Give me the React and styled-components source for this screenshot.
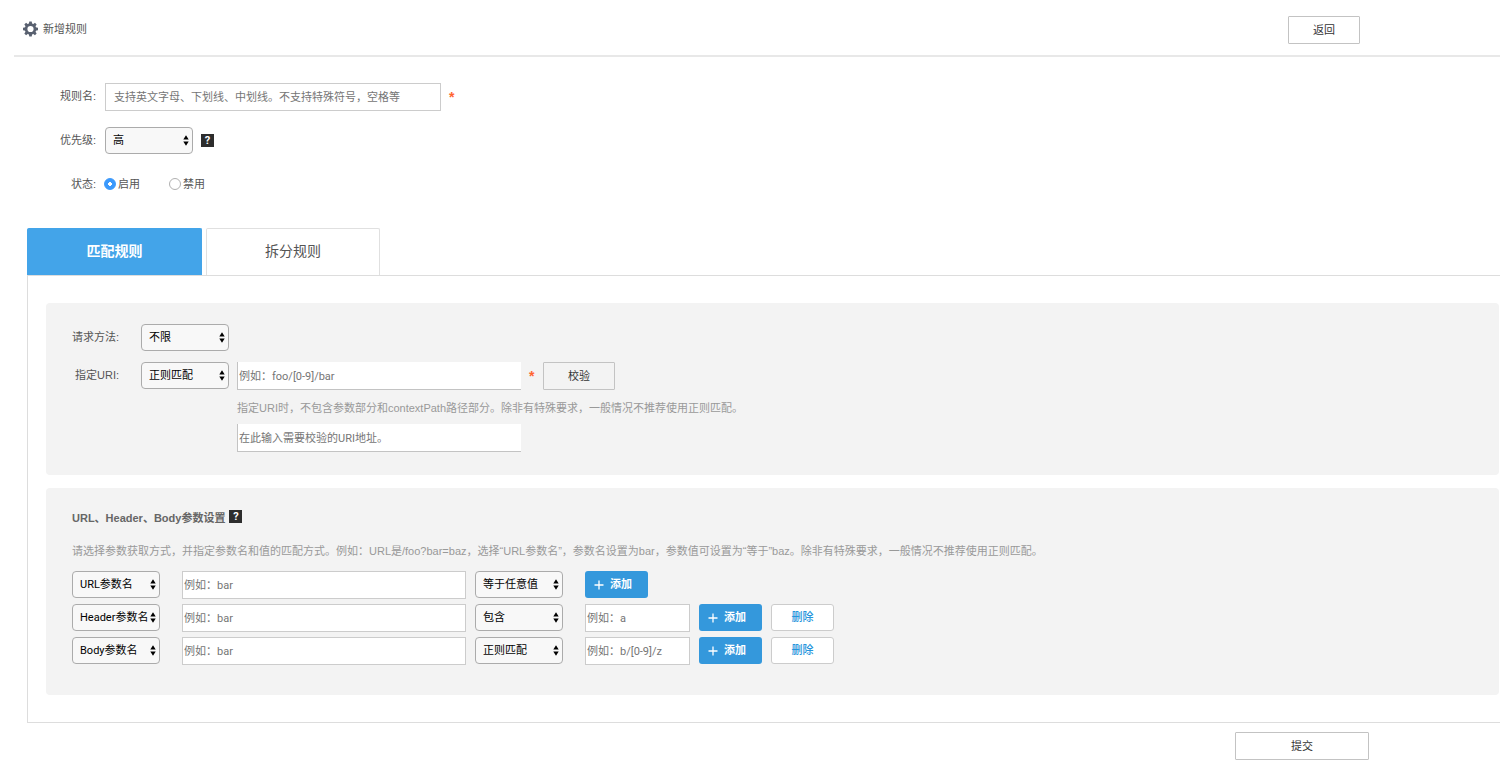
import React, { useState } from "react";
import styled, { createGlobalStyle } from "styled-components";

const GlobalStyle = createGlobalStyle`
  * {
    box-sizing: border-box;
  }
  body {
    margin: 0;
    background: #fff;
    color: #666;
    font: 11px/16px "Liberation Sans", "Noto Sans CJK SC", sans-serif;
  }
  button, input, select {
    font: 11px/16px Roboto, "Noto Sans CJK SC", sans-serif;
    margin: 0;
  }
`;

const Page = styled.div`
  padding-bottom: 4px;
`;

const Header = styled.header`
  display: flex;
  align-items: center;
  justify-content: space-between;
  height: 57px;
  margin-left: 14px;
  padding: 4px 140px 0 8px;
  border-bottom: 2px solid #e8e8e8;
`;

const Title = styled.h1`
  display: flex;
  align-items: center;
  gap: 4px;
  margin: 0;
  padding-bottom: 2px;
  font-size: 11px;
  font-weight: normal;
  color: #555;
`;

const OutlineButton = styled.button`
  width: ${(props) => (props.$wide ? "134px" : "72px")};
  height: 28px;
  padding: 2px 0 0;
  border: 1px solid #c3c3c3;
  border-radius: 1px;
  background: ${(props) => (props.$muted ? "#f3f3f3" : "#fff")};
  color: #333;
  cursor: pointer;
`;

const BasicForm = styled.div`
  display: grid;
  grid-template-columns: 96px 1fr;
  grid-auto-rows: 28px;
  row-gap: 16px;
  column-gap: 9px;
  align-items: start;
  padding-top: 26px;
`;

const Label = styled.label`
  text-align: right;
  line-height: 26px;
  color: #555;
`;

const Field = styled.div`
  display: flex;
  align-items: flex-start;
  gap: 8px;
`;

const TextInput = styled.input`
  width: ${(props) => props.$width};
  height: 28px;
  padding: 0 ${(props) => (props.$roomy ? "8px" : "1px")};
  border: 1px solid #ccc;
  border-radius: 0;
  background: #fff;
  color: #333;
  outline: none;
  &::placeholder {
    color: #757575;
    opacity: 1;
  }
`;

const InsetInput = styled(TextInput)`
  padding-top: 2px;
  border-width: 0 0 1px 1px;
  border-color: #c3c3c3;
`;

const Required = styled.span`
  width: 6px;
  line-height: 28px;
  color: #ff6430;
  font-size: 14px;
  font-weight: bold;
`;

const SelectBox = styled.div`
  position: relative;
  width: 88px;
  height: 27px;
  > svg {
    position: absolute;
    right: 4px;
    top: 8px;
    pointer-events: none;
  }
`;

const NativeSelect = styled.select`
  appearance: none;
  width: 100%;
  height: 100%;
  padding: 1px 0 0 7px;
  border: 1px solid #ababab;
  border-radius: 4px;
  background: #f8f8f8;
  color: #000;
`;

const HelpBadge = styled.button`
  align-self: ${(props) => (props.$centered ? "center" : "flex-start")};
  width: 13px;
  height: 13px;
  padding: 0;
  border: none;
  background: #2d2d2d;
  color: #fff;
  font-size: 11px;
  line-height: 13px;
  font-weight: bold;
`;

const RadioGroup = styled.div`
  display: flex;
  gap: 29px;
  margin-left: -1px;
`;

const RadioLabel = styled.label`
  display: flex;
  align-items: center;
  gap: 2px;
  line-height: 26px;
  color: #555;
`;

const Radio = styled.input`
  appearance: none;
  width: 12px;
  height: 12px;
  border: 1px solid #b0b0b0;
  border-radius: 50%;
  background: #fff;
  &:checked {
    border-color: #3b99fc;
    background: radial-gradient(circle, #fff 0 2px, #3b99fc 2px);
  }
`;

const Tabs = styled.div`
  display: flex;
  gap: 4px;
  margin: 29px 0 0 27px;
`;

const Tab = styled.button`
  width: ${(props) => (props.$active ? "175px" : "174px")};
  height: 47px;
  padding: 0 0 2px;
  border: 1px solid ${(props) => (props.$active ? "#43a4e9" : "#e0e0e0")};
  border-bottom: none;
  border-radius: 2px 2px 0 0;
  background: ${(props) => (props.$active ? "#43a4e9" : "#fff")};
  color: ${(props) => (props.$active ? "#fff" : "#555")};
  font-size: 14px;
  line-height: 20px;
  font-weight: ${(props) => (props.$active ? "bold" : "normal")};
  cursor: pointer;
`;

const Panel = styled.div`
  display: flex;
  flex-direction: column;
  gap: 13px;
  margin-left: 27px;
  padding: 27px 1px 27px 18px;
  border: 1px solid #ddd;
  border-right: none;
`;

const Card = styled.section`
  padding: ${(props) => props.$padding};
  border-radius: 4px;
  background: #f3f3f3;
`;

const MatchForm = styled.div`
  display: grid;
  grid-template-columns: 73px 1fr;
  grid-template-rows: 28px 28px auto;
  column-gap: 22px;
  row-gap: 10px;
  align-items: start;
`;

const UriDetails = styled.div`
  grid-column: 2;
  display: flex;
  flex-direction: column;
  align-items: flex-start;
  gap: 8px;
  padding-left: 96px;
`;

const Hint = styled.p`
  margin: 0;
  color: #999;
`;

const SectionTitle = styled.h2`
  display: flex;
  align-items: flex-start;
  gap: 4px;
  margin: 0 0 17px;
  font-size: 11px;
  line-height: 16px;
  color: #666;
`;

const ParamList = styled.div`
  display: flex;
  flex-direction: column;
  gap: 5px;
  margin-top: 12px;
`;

const ParamRow = styled.div`
  display: grid;
  grid-template-columns: 88px 381px 1fr;
  column-gap: 22px;
  height: 28px;
`;

const ParamGroup = styled(Field)`
  gap: 9px;
`;

const AddButton = styled.button`
  display: flex;
  align-items: center;
  gap: 6px;
  width: 63px;
  height: 27px;
  padding: 0 0 0 9px;
  border: none;
  border-radius: 3px;
  background: #3498dc;
  color: #fff;
  font-weight: bold;
  cursor: pointer;
`;

const DeleteButton = styled.button`
  width: 63px;
  height: 27px;
  padding: 0;
  border: 1px solid #ccc;
  border-radius: 3px;
  background: #fff;
  color: #2594dc;
  font-weight: 500;
  cursor: pointer;
`;

const Footer = styled.footer`
  display: flex;
  justify-content: flex-end;
  padding: 9px 131px 0 0;
`;

const GearIcon = () => (
  <svg width="17" height="16" viewBox="0 0 16 16" fill="#596170">
    <path
      fillRule="evenodd"
      d="M8 2.2a5.800 5.800 0 1 1 0 11.600A5.800 5.800 0 0 1 8 2.200zM8 4.900a3.100 3.100 0 1 0 0 6.200 3.100 3.100 0 0 0 0-6.200z"
    />
    {[0, 45, 90, 135, 180, 225, 270, 315].map((angle) => (
      <path
        key={angle}
        d="M6.300 3.200 6.800.5h2.400l.5 2.700z"
        transform={`rotate(${angle} 8 8)`}
      />
    ))}
  </svg>
);

const ArrowsIcon = () => (
  <svg width="6" height="11" viewBox="0 0 6 11" fill="#000">
    <path d="M3 .3 5.700 4.500H.3zM3 10.700.3 6.500h5.400z" />
  </svg>
);

const PlusIcon = () => (
  <svg width="10" height="10" viewBox="0 0 10 10" stroke="#fff" strokeWidth="1.300">
    <path d="M5 .5v9M.5 5h9" />
  </svg>
);

const Select = ({ options, ...rest }) => (
  <SelectBox>
    <NativeSelect {...rest}>
      {options.map((option) => (
        <option key={option}>{option}</option>
      ))}
    </NativeSelect>
    <ArrowsIcon />
  </SelectBox>
);

const sources = ["URL参数名", "Header参数名", "Body参数名"];
const operators = ["等于任意值", "包含", "正则匹配"];

const params = [
  { source: "URL参数名", operator: "等于任意值" },
  { source: "Header参数名", operator: "包含", example: "例如：a" },
  { source: "Body参数名", operator: "正则匹配", example: "例如：b/[0-9]/z" },
];

const tabs = ["匹配规则", "拆分规则"];

export default function App() {
  const [activeTab, setActiveTab] = useState(tabs[0]);

  return (
    <Page>
      <GlobalStyle />
      <Header>
        <Title>
          <GearIcon />
          新增规则
        </Title>
        <OutlineButton type="button">返回</OutlineButton>
      </Header>

      <BasicForm>
        <Label htmlFor="name">规则名:</Label>
        <Field>
          <TextInput
            id="name"
            $width="336px"
            $roomy
            placeholder="支持英文字母、下划线、中划线。不支持特殊符号，空格等"
          />
          <Required>*</Required>
        </Field>
        <Label htmlFor="priority">优先级:</Label>
        <Field>
          <Select id="priority" options={["高", "中", "低"]} />
          <HelpBadge type="button" $centered>
            ?
          </HelpBadge>
        </Field>
        <Label as="span">状态:</Label>
        <RadioGroup>
          <RadioLabel>
            <Radio type="radio" name="status" defaultChecked />
            启用
          </RadioLabel>
          <RadioLabel>
            <Radio type="radio" name="status" />
            禁用
          </RadioLabel>
        </RadioGroup>
      </BasicForm>

      <Tabs role="tablist">
        {tabs.map((tab) => (
          <Tab
            key={tab}
            type="button"
            role="tab"
            aria-selected={tab === activeTab}
            $active={tab === activeTab}
            onClick={() => setActiveTab(tab)}
          >
            {tab}
          </Tab>
        ))}
      </Tabs>

      <Panel>
        <Card $padding="21px 0 23px">
          <MatchForm>
            <Label htmlFor="method">请求方法:</Label>
            <Select id="method" options={["不限", "GET", "POST"]} />
            <Label htmlFor="uri-mode">指定URI:</Label>
            <Field>
              <Select
                id="uri-mode"
                options={operators}
                defaultValue="正则匹配"
              />
              <InsetInput
                $width="284px"
                aria-label="URI"
                placeholder="例如：foo/[0-9]/bar"
              />
              <Required>*</Required>
              <OutlineButton type="button" $muted>
                校验
              </OutlineButton>
            </Field>
            <UriDetails>
              <Hint>
                指定URI时，不包含参数部分和contextPath路径部分。除非有特殊要求，一般情况不推荐使用正则匹配。
              </Hint>
              <InsetInput
                $width="284px"
                aria-label="校验URI"
                placeholder="在此输入需要校验的URI地址。"
              />
            </UriDetails>
          </MatchForm>
        </Card>

        <Card $padding="22px 26px 30px">
          <SectionTitle>
            URL、Header、Body参数设置
            <HelpBadge type="button">?</HelpBadge>
          </SectionTitle>
          <Hint>
            请选择参数获取方式，并指定参数名和值的匹配方式。例如：URL是/foo?bar=baz，选择“URL参数名”，参数名设置为bar，参数值可设置为“等于”baz。除非有特殊要求，一般情况不推荐使用正则匹配。
          </Hint>
          <ParamList>
            {params.map(({ source, operator, example }) => (
              <ParamRow key={source}>
                <Select
                  aria-label="参数来源"
                  options={sources}
                  defaultValue={source}
                />
                <ParamGroup>
                  <TextInput
                    $width="284px"
                    aria-label="参数名"
                    placeholder="例如：bar"
                  />
                  <Select
                    aria-label="匹配方式"
                    options={operators}
                    defaultValue={operator}
                  />
                </ParamGroup>
                <ParamGroup>
                  {example && (
                    <TextInput
                      $width="105px"
                      aria-label="参数值"
                      placeholder={example}
                    />
                  )}
                  <AddButton type="button">
                    <PlusIcon />
                    添加
                  </AddButton>
                  {example && <DeleteButton type="button">删除</DeleteButton>}
                </ParamGroup>
              </ParamRow>
            ))}
          </ParamList>
        </Card>
      </Panel>

      <Footer>
        <OutlineButton type="submit" $wide>
          提交
        </OutlineButton>
      </Footer>
    </Page>
  );
}
